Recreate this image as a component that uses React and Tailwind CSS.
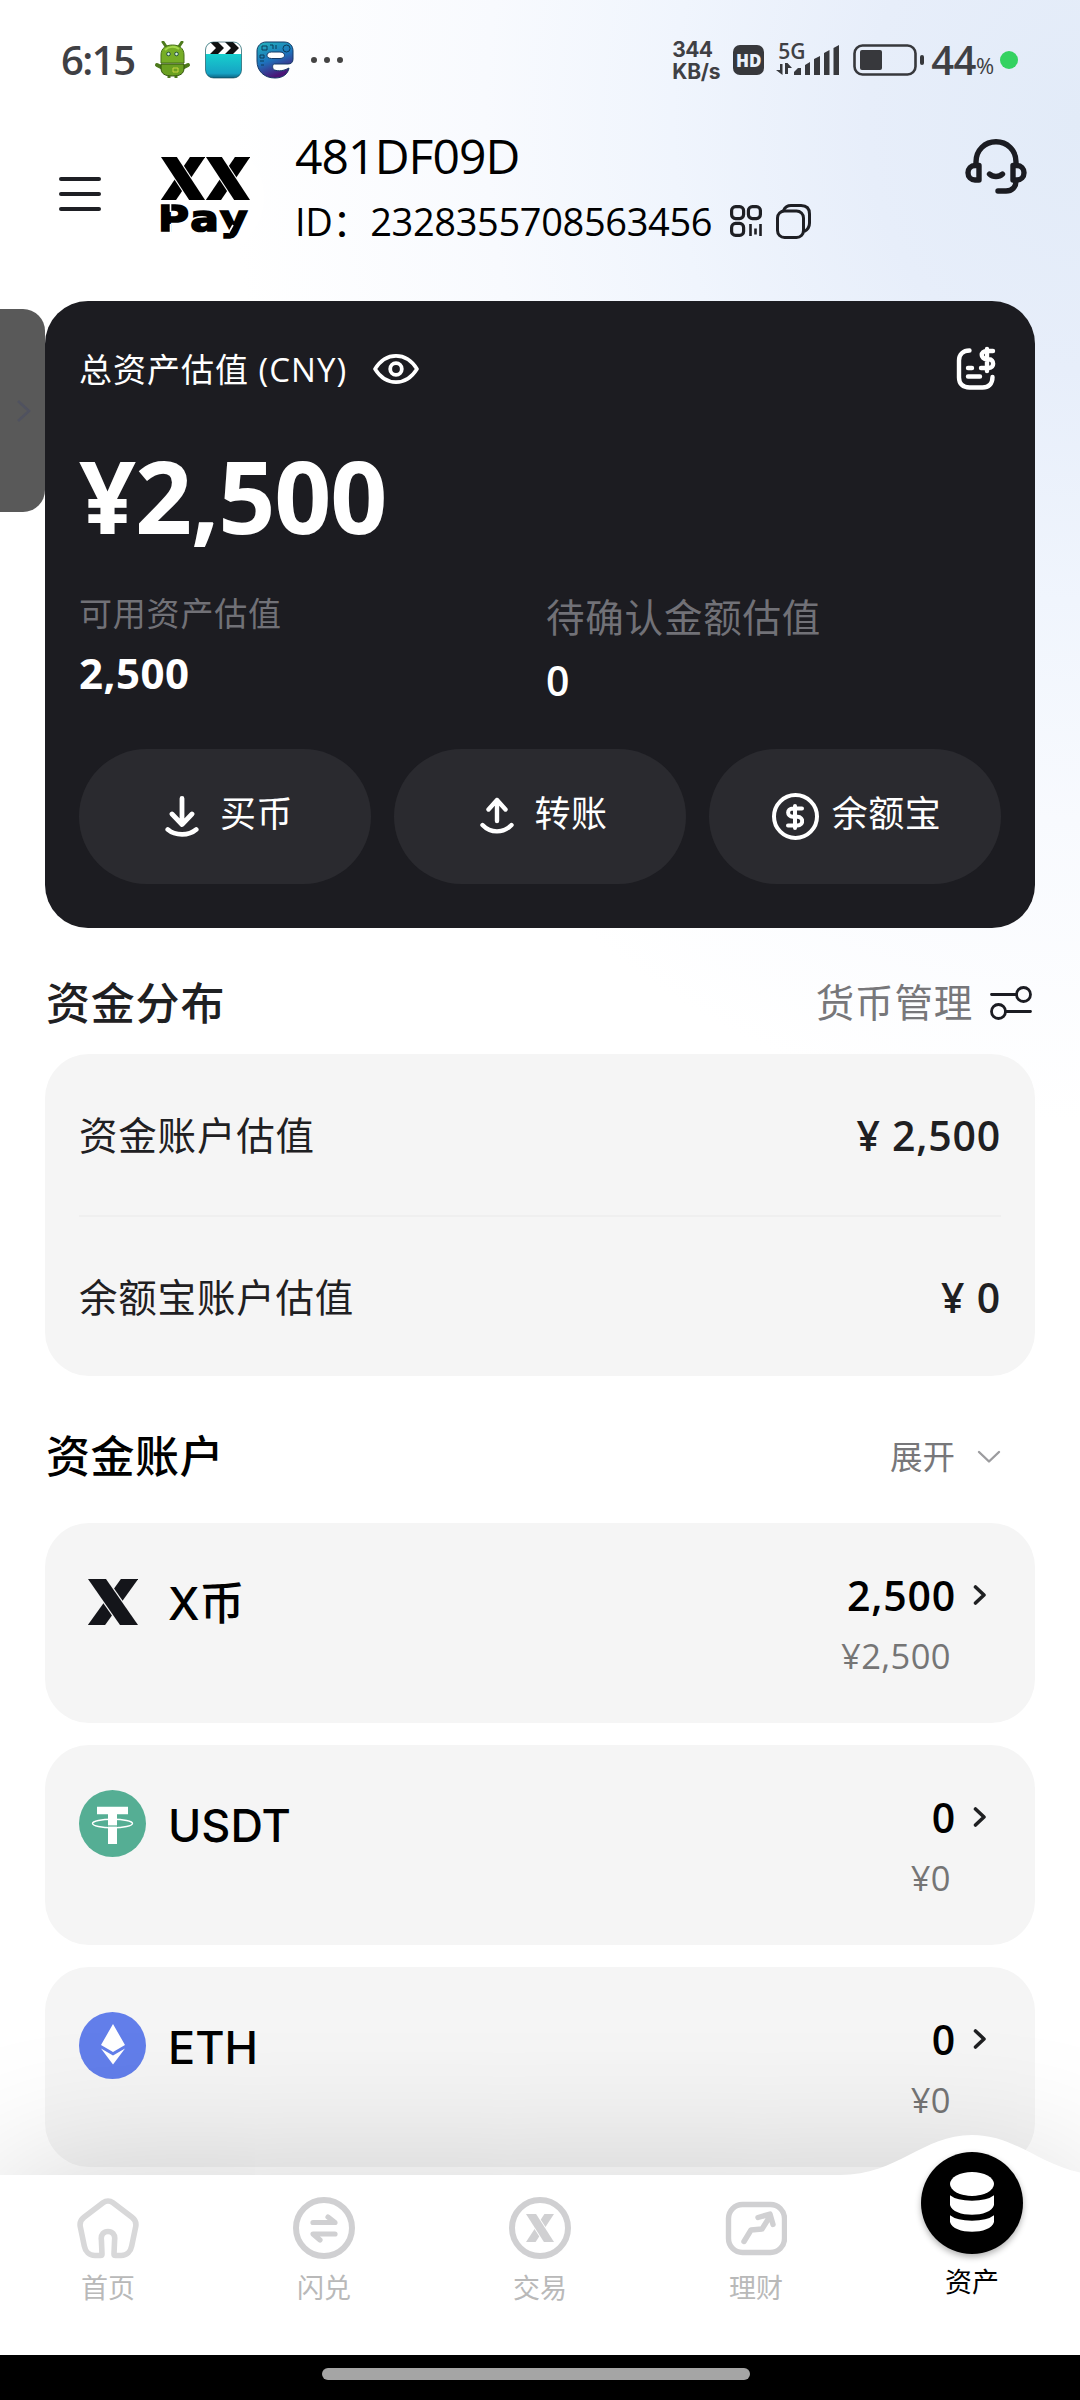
import React from 'react';

const XMark = ({ className, color = '#14151a', gap = '#f5f5f5' }) => (
  <svg viewBox="0 0 50 46" preserveAspectRatio="none" className={className}>
    <line x1="48.7" y1="-10" x2="1.3" y2="56" stroke={color} strokeWidth="14" />
    <line x1="2" y1="-10" x2="48" y2="56" stroke={gap} strokeWidth="17.2" />
    <line x1="2" y1="-10" x2="48" y2="56" stroke={color} strokeWidth="14.8" />
  </svg>
);

const AndroidIcon = () => (
  <svg viewBox="0 0 37 38" className="w-[37px] h-[38px]">
    <path d="M9 1l4 6M28 1l-4 6" stroke="#4d7a1c" strokeWidth="3" strokeLinecap="round" />
    <path d="M3 24l6 3M34 24l-6 3" stroke="#4d7a1c" strokeWidth="4" strokeLinecap="round" />
    <path d="M15 33v4M22 33v4" stroke="#4d7a1c" strokeWidth="3" />
    <path d="M7 14C7 7 12 4 18.500 4S30 7 30 14v8H7z" fill="#76ad26" stroke="#466f18" />
    <path d="M7 23h23v4c0 6-4 8-11.500 8S7 33 7 27z" fill="#6aa021" stroke="#33520f" />
    <path d="M11 9c4-4 10-4 14-1" stroke="#a5d84d" strokeWidth="2" fill="none" />
    <circle cx="14.500" cy="13" r="1.800" fill="#d8f3e4" stroke="#24503c" />
    <circle cx="22.500" cy="13" r="1.800" fill="#d8f3e4" stroke="#24503c" />
    <path d="M19 27h5v4h-5z" fill="none" stroke="#c9d442" />
  </svg>
);

const ClapperIcon = () => (
  <svg viewBox="0 0 37 38" className="w-[37px] h-[38px]">
    <defs>
      <linearGradient id="clap" x1="0" y1="0" x2="0" y2="1">
        <stop offset="0.3" stopColor="#17d3ce" />
        <stop offset="0.85" stopColor="#16a3c4" />
        <stop offset="1" stopColor="#0a5573" />
      </linearGradient>
      <clipPath id="clapBox"><rect x="0.500" y="1" width="36" height="36" rx="8" /></clipPath>
    </defs>
    <g clipPath="url(#clapBox)">
      <rect width="37" height="38" fill="url(#clap)" />
      <rect width="37" height="13" fill="#fff" />
      <path d="M5 1h8l6 6-6 6H5l6-6zM20 1h8l6 6-6 6h-8l6-6z" fill="#111" />
    </g>
    <rect x="0.500" y="1" width="36" height="36" rx="8" fill="none" stroke="#0e4450" strokeOpacity="0.6" />
  </svg>
);

const BrowserIcon = () => (
  <svg viewBox="0 0 38 38" className="w-[38px] h-[38px]">
    <defs>
      <linearGradient id="brw" x1="0" y1="0" x2="0.4" y2="1">
        <stop offset="0" stopColor="#23b6bd" />
        <stop offset="0.55" stopColor="#1d74bd" />
        <stop offset="1" stopColor="#4a1476" />
      </linearGradient>
    </defs>
    <path
      d="M10 1h18c6 0 9 4 9 9v8c0 3.500-2 5-5 5H18.500c-2.500 0-2.500 5 0 6 4 1.500 9 1 14.500-2-1 6-6 10-14 10C8 37 1 30 1 20V10c0-5 4-9 9-9zM15.500 11c-6 0-6 6.500 0 6.500h8.500c6 0 6-6.500 0-6.500z"
      fill="url(#brw)" fillRule="evenodd" stroke="#153a66"
    />
    <path d="M6 5h5v4H6zM14 4h3v4M20 4v4M4 14h4v3H4zM4 20h4M5 24h3" stroke="#0c3c5a" fill="none" />
    <circle cx="30.500" cy="7.500" r="3.500" fill="none" stroke="#0c3c5a" />
  </svg>
);

const StatusBar = () => (
  <div className="h-[120px] flex items-center pl-[61px] text-[#3f4044] shrink-0">
    <span className="w-[93px] text-[40px] font-semibold tracking-[-1.5px] leading-none">6:15</span>
    <div className="flex items-center gap-[14px]">
      <AndroidIcon />
      <ClapperIcon />
      <BrowserIcon />
    </div>
    <div className="ml-[17px] flex gap-[7px]">
      <i className="size-[6px] rounded-full bg-[#444]" />
      <i className="size-[6px] rounded-full bg-[#444]" />
      <i className="size-[6px] rounded-full bg-[#444]" />
    </div>
    <div className="ml-auto mr-[62px] flex items-center">
      <div className="w-[61px] h-[44px] pt-[1px] flex flex-col justify-between font-['Inter'] font-bold whitespace-nowrap">
        <span className="text-[21px] leading-[22px] tracking-[-0.6px]">344</span>
        <span className="text-[21px] leading-[22px] tracking-[-0.2px]">KB/s</span>
      </div>
      <div className="w-[31px] h-[30px] rounded-[7px] bg-[#37383c] text-[#eaf1fb] text-[17px] font-extrabold leading-none flex items-center justify-center">HD</div>
      <div className="ml-[12px] w-[64px] h-[34px] relative">
        <span className="block text-[21px] leading-[16px] font-semibold pl-[2px]">5G</span>
        <svg viewBox="0 0 64 30" className="absolute left-0 bottom-[2px] w-[64px] h-[30px]" fill="#37383c">
          <path d="M4 19h2.500v11L0 25h4zM9 29V18h2.500l4.500 5h-4v6z" />
          <path d="M18 30v-3l4-4h3v7zM29 30V20l5-3v13zM38 30V14l6-3v19zM48 30V8l5.500-3v25zM57.500 30V3L63 0v30z" />
        </svg>
      </div>
      <svg viewBox="0 0 72 32" className="ml-[13px] w-[72px] h-[32px]" fill="none">
        <rect x="1.500" y="1.500" width="61" height="29" rx="8" stroke="#37383c" strokeWidth="2.600" />
        <rect x="7" y="6" width="22" height="20" rx="2" fill="#37383c" />
        <rect x="67" y="11" width="4" height="10" rx="2" fill="#37383c" />
      </svg>
      <span className="ml-[6px] text-[40px] leading-none font-semibold tracking-[-0.5px]">44</span>
      <span className="text-[22px] leading-none pt-[10px] w-[18px]">%</span>
      <i className="ml-[6px] size-[18px] rounded-full bg-[#34d261]" />
    </div>
  </div>
);

const Header = () => (
  <div className="h-[181px] flex items-start pl-[59px] pr-[53px] shrink-0">
    <div className="mt-[57px] w-[42px] h-[34px] flex flex-col justify-between">
      <i className="h-[4px] rounded-full bg-[#1e1f24]" />
      <i className="h-[4px] rounded-full bg-[#1e1f24]" />
      <i className="h-[4px] rounded-full bg-[#1e1f24]" />
    </div>

    <div className="ml-[45px] mt-[18px] size-[118px] rounded-full bg-white flex flex-col items-center pt-[19px]">
      <div className="flex gap-[1px]">
        <XMark className="w-[44px] h-[43px]" color="#000" gap="#fff" />
        <XMark className="w-[44px] h-[43px]" color="#000" gap="#fff" />
      </div>
      <svg viewBox="0 0 90 42" className="mt-[1px] w-[90px] h-[42px] overflow-visible">
        <g fontSize="35" fontWeight="700" stroke="#000" strokeWidth="1.600" className="font-['DejaVu_Sans']">
          <text x="-2" y="30" textLength="92" lengthAdjust="spacingAndGlyphs" letterSpacing="2">Pay</text>
        </g>
        <path d="M10.500 3v8M10.500 23v9M73 24l-4.500 8" stroke="#fff" strokeWidth="1.600" />
      </svg>
    </div>

    <div className="ml-[31px] mt-[8px] text-black">
      <p className="text-[48px] leading-[56px] tracking-[-0.9px]">481DF09D</p>
      <div className="mt-[13px] h-[48px] flex items-center text-[38px] leading-[48px]">
        <span className="tracking-[-0.35px]">ID：2328355708563456</span>
        <svg viewBox="0 0 32 32" className="ml-[18px] w-[32px] h-[32px]" fill="none" stroke="#1e1f24" strokeWidth="3.200">
          <rect x="1.600" y="1.600" width="12" height="12" rx="4" />
          <rect x="18.400" y="1.600" width="12" height="12" rx="4" />
          <rect x="1.600" y="18.400" width="12" height="12" rx="4" />
          <path d="M20.500 19v12M25.500 23.500v6M30.500 19v12" strokeWidth="2.600" />
        </svg>
        <svg viewBox="0 0 35 35" className="ml-[14px] w-[35px] h-[35px]" fill="none" stroke="#1e1f24" strokeWidth="3">
          <rect x="1.500" y="7" width="26" height="26.500" rx="7" />
          <path d="M7.500 6.500C9 3 11 1.500 15 1.500h10c5.500 0 8.500 3 8.500 8.500v9c0 4-2 7-5.500 8.500" />
        </svg>
      </div>
    </div>

    <svg viewBox="0 0 62 55" className="ml-auto mt-[19px] w-[62px] h-[55px]" fill="none" stroke="#1b1c22" strokeWidth="5.400" strokeLinecap="round" strokeLinejoin="round">
      <path d="M11 25v-2C11 11 20 2.800 31 2.800S51 11 51 23v2" />
      <path d="M14 26.500v14.500H10c-4 0-7-3-7-7.200s3-7.300 7-7.300zM48 26.500v14.500h4c4 0 7-3 7-7.200s-3-7.300-7-7.300z" />
      <path d="M24.500 35c3.500 3.300 9.500 3.300 13 0M51 42c0 6-4 10-10 10h-8" />
    </svg>
  </div>
);

const ActionButton = ({ icon, label, gap }) => (
  <button className={`h-[135px] rounded-full bg-[#2a2a2f] flex items-center justify-center ${gap}`}>
    {icon}
    <span className="text-[36px] leading-none tracking-[0.5px] -mt-[5px]">{label}</span>
  </button>
);

const AssetCard = () => (
  <div className="mx-[45px] h-[627px] rounded-[43px] bg-[#1c1c21] text-white px-[34px] shrink-0">
    <div className="h-[136px] flex items-center">
      <span className="text-[33px] leading-none tracking-[1px]">总资产估值 (CNY)</span>
      <svg viewBox="0 0 46 30" className="ml-[26px] w-[46px] h-[30px]" fill="none" stroke="#fff" strokeWidth="3.600">
        <path d="M2 15C13-2.500 33-2.500 44 15 33 32.500 13 32.500 2 15z" strokeLinejoin="round" />
        <circle cx="23" cy="15" r="5.800" strokeWidth="3.800" />
      </svg>
      <svg viewBox="0 0 40 44" className="ml-auto mr-[5px] -mt-[3px] w-[40px] h-[44px]" fill="none" stroke="#fff" strokeWidth="4.400" strokeLinecap="round" strokeLinejoin="round">
        <path d="M13.500 4.500C7 4.500 3 8.500 3 14.500v17c0 6.500 4 10 10.500 10h13c6 0 10-3.500 10-10.500" />
        <path d="M12 22h4M12 30.500h12M37 5h-6c-7 0-7 8 0 8.300h2c5.500.2 5.500 8.700 0 8.700h-8M31 3v22" />
      </svg>
    </div>
    <p className="h-[122px] text-[100px] leading-[116px] font-bold tracking-[-1.2px]">¥2,500</p>
    <div className="grid grid-cols-2 mt-[28px] h-[162px]">
      <div>
        <p className="text-[33px] leading-[50px] tracking-[0.8px] text-[#717177] mt-[2px]">可用资产估值</p>
        <p className="text-[42px] leading-[60px] font-bold tracking-[0.5px] mt-[4px]">2,500</p>
      </div>
      <div className="pl-[6px]">
        <p className="text-[38.500px] leading-[56px] tracking-[0.8px] text-[#717177] mt-[2px]">待确认金额估值</p>
        <p className="text-[41px] leading-[60px] font-semibold mt-[5px]">0</p>
      </div>
    </div>
    <div className="grid grid-cols-3 gap-[23px]">
      <ActionButton
        label="买币"
        gap="gap-[21px] pl-[8px]"
        icon={
          <svg viewBox="0 0 34 41" className="w-[34px] h-[41px]" fill="none" stroke="#fff" strokeWidth="4.800" strokeLinecap="round" strokeLinejoin="round">
            <path d="M17 2.500V28M7 18l10 10.500L27 18M2.800 33.500c7.500 6.500 21 6.500 28.400 0" />
          </svg>
        }
      />
      <ActionButton
        label="转账"
        gap="gap-[20px] pl-[8px]"
        icon={
          <svg viewBox="0 0 34 37" className="-mt-[2px] w-[34px] h-[37px]" fill="none" stroke="#fff" strokeWidth="4.400" strokeLinecap="round" strokeLinejoin="round">
            <path d="M17 24V3M8.500 12.500L17 3l8.500 9.500M2.500 28c8 8.500 21 8.500 29 0" />
          </svg>
        }
      />
      <ActionButton
        label="余额宝"
        gap="gap-[13px] pl-[3px]"
        icon={
          <span className="size-[47px] rounded-full border-4 border-white flex items-center justify-center">
            <svg viewBox="0 0 18 26" className="w-[18px] h-[26px]" fill="none" stroke="#fff" strokeWidth="4" strokeLinecap="round" strokeLinejoin="round">
              <path d="M16 4.500H7c-6.500 0-6.500 8 0 8.300h4.500c6.500.3 6 8.700 0 8.700H2M9 2v22" />
            </svg>
          </span>
        }
      />
    </div>
  </div>
);

const DistributionRow = ({ label, value }) => (
  <div className="h-[160px] flex items-center justify-between text-[#1f2022]">
    <span className="text-[38.500px] tracking-[0.8px] leading-none">{label}</span>
    <span className="text-[41px] font-semibold tracking-[0.8px] leading-none">{value}</span>
  </div>
);

const Distribution = () => (
  <>
    <div className="h-[126px] pt-[24px] pl-[46px] pr-[48px] flex items-start justify-between shrink-0">
      <h2 className="text-[44px] leading-[102px] h-[102px] font-medium tracking-[0.8px] text-[#1f2022]">资金分布</h2>
      <div className="flex items-center h-[102px]">
        <span className="text-[38.500px] tracking-[0.8px] text-[#77777a]">货币管理</span>
        <svg viewBox="0 0 42 34" className="ml-[17px] w-[42px] h-[34px]" fill="none" stroke="#1b1c22" strokeWidth="2.800" strokeLinecap="round">
          <circle cx="33.500" cy="8.500" r="7" />
          <circle cx="8.500" cy="25.500" r="7" />
          <path d="M1.500 8.500h25M15.500 25.500h25" />
        </svg>
      </div>
    </div>
    <div className="mx-[45px] h-[322px] rounded-[44px] bg-[#f5f5f5] px-[34px] pt-[1px] shrink-0">
      <DistributionRow label="资金账户估值" value="¥ 2,500" />
      <div className="h-[2px] bg-[#efefef]" />
      <DistributionRow label="余额宝账户估值" value="¥ 0" />
    </div>
  </>
);

const UsdtIcon = () => (
  <svg viewBox="0 0 67 67" className="size-[67px]">
    <circle cx="33.500" cy="33.500" r="33.500" fill="#55ae94" />
    <ellipse cx="33.500" cy="33.500" rx="20" ry="4.200" fill="none" stroke="#fff" strokeWidth="1.400" />
    <path d="M18 20.500h31M33.500 19v35" stroke="#fff" strokeWidth="7.500" />
    <path d="M33.500 20v34" stroke="#fff" strokeWidth="9" />
    <path d="M28 36h11" stroke="#55ae94" strokeWidth="1.200" />
  </svg>
);

const EthIcon = () => (
  <svg viewBox="0 0 67 67" className="size-[67px]">
    <circle cx="33.500" cy="33.500" r="33.500" fill="#627eea" />
    <path d="M34 12l12 21-12 7-12-7zM34 52.500L22 36.500l12 7 12-7z" fill="#fff" />
  </svg>
);

const COINS = [
  { name: 'X币', amount: '2,500', fiat: '¥2,500', icon: <XMark className="ml-[9px] mt-[1px] w-[50px] h-[46px]" /> },
  { name: 'USDT', amount: '0', fiat: '¥0', icon: <UsdtIcon /> },
  { name: 'ETH', amount: '0', fiat: '¥0', icon: <EthIcon /> },
];

const CoinCard = ({ coin }) => (
  <div className="h-[200px] rounded-[44px] bg-[#f5f5f5] pl-[34px] pr-[48px] pt-[45px] flex justify-between shrink-0">
    <div className="h-[67px] flex items-center">
      <div className="w-[89px]">{coin.icon}</div>
      <span className="text-[45px] font-medium leading-none text-black pt-[3px] font-['Inter','Noto_Sans_CJK_SC',sans-serif]">{coin.name}</span>
    </div>
    <div>
      <div className="h-[54px] flex items-center justify-end">
        <span className="text-[41px] font-semibold tracking-[0.8px] leading-none text-black">{coin.amount}</span>
        <svg viewBox="0 0 14 22" className="ml-[17px] w-[14px] h-[22px]" fill="none" stroke="#1f2022" strokeWidth="3.600" strokeLinecap="round" strokeLinejoin="round">
          <path d="M2.500 3l8.500 8-8.500 8" />
        </svg>
      </div>
      <p className="text-right pr-[36px] mt-[10px] text-[34.500px] leading-[48px] tracking-[0.4px] text-[#757575]">{coin.fiat}</p>
    </div>
  </div>
);

const Accounts = () => (
  <>
    <div className="h-[147px] pl-[46px] pr-[79px] pb-[5px] pt-[18px] flex items-center justify-between shrink-0">
      <h2 className="text-[44px] leading-none font-medium tracking-[0.5px] text-black">资金账户</h2>
      <div className="flex items-center pt-[2px]">
        <span className="text-[32.500px] leading-none text-[#77777a]">展开</span>
        <svg viewBox="0 0 24 14" className="ml-[22px] w-[24px] h-[14px]" fill="none" stroke="#9c9c9f" strokeWidth="2.400" strokeLinecap="round" strokeLinejoin="round">
          <path d="M2 2l10 9.500L22 2" />
        </svg>
      </div>
    </div>
    <div className="mx-[45px] flex flex-col gap-[22px]">
      {COINS.map((coin) => (
        <CoinCard key={coin.name} coin={coin} />
      ))}
    </div>
  </>
);

const TABS = [
  {
    label: '首页',
    icon: (
      <path d="M31 4c2 0 3.500.7 5 1.800l19 14.400c3.300 2.500 4.500 5.500 3.700 9.500l-4 19.300c-1 5.500-5 9.500-10.500 9.500h-5.700c-1 0-1.500-.5-1.500-1.500L37.600 43c.9-5.500-2.600-8.500-6.600-8.500s-7.500 3-6.600 8.500L25 57c0 1-.5 1.500-1.500 1.500h-5.700c-5.500 0-9.500-4-10.500-9.500l-4-19.300c-.8-4 .4-7 3.700-9.500L26 5.800C27.500 4.700 29 4 31 4z" stroke="#d8d8d9" strokeWidth="5.600" strokeLinejoin="round" />
    ),
  },
  {
    label: '闪兑',
    icon: (
      <>
        <circle cx="31" cy="31" r="28" stroke="#d0d0d2" strokeWidth="6" />
        <path d="M20 25.500h22L35 20M42 37H20l7 6" stroke="#d0d0d2" strokeWidth="5.200" strokeLinecap="round" strokeLinejoin="round" />
      </>
    ),
  },
  {
    label: '交易',
    icon: (
      <>
        <circle cx="31" cy="31" r="28" stroke="#d0d0d2" strokeWidth="6" />
        <svg x="17" y="17" width="28" height="28" viewBox="0 0 50 46" preserveAspectRatio="none">
          <path d="M48.700-10L1.300 56" stroke="#d0d0d2" strokeWidth="14" />
          <path d="M2-10l46 66" stroke="#fff" strokeWidth="18" />
          <path d="M2-10l46 66" stroke="#d0d0d2" strokeWidth="14.800" />
        </svg>
      </>
    ),
  },
  {
    label: '理财',
    icon: (
      <>
        <rect x="3.500" y="7.500" width="56" height="48" rx="14" stroke="#d0d0d2" strokeWidth="5.400" />
        <path d="M19 44.500l7-11.500 11-1 7.500-12M33 20.500l12-3.500 3 10.500" stroke="#d0d0d2" strokeWidth="5.400" strokeLinecap="round" strokeLinejoin="round" />
      </>
    ),
  },
];

const BottomNav = () => (
  <div className="absolute inset-x-0 bottom-0">
    <div className="relative h-[180px] bg-white shadow-[0_0_150px_rgba(0,0,0,0.18)] grid grid-cols-5">
      <svg viewBox="0 0 240 41" className="absolute right-0 -top-[40px] w-[240px] h-[41px]" fill="#fff">
        <path d="M0 40C58 40 82 0 132 0s74 40 132 40v1H0z" />
      </svg>
      {TABS.map((tab) => (
        <div key={tab.label} className="flex flex-col items-center pt-[22px]">
          <svg viewBox="0 0 62 62" className="size-[62px]" fill="none">{tab.icon}</svg>
          <span className="mt-[9px] text-[27px] leading-[40px] text-[#b9b9b9]">{tab.label}</span>
        </div>
      ))}
      <div className="relative flex flex-col items-center -mt-[23px]">
        <div className="size-[102px] rounded-full bg-black shadow-[0_3px_6px_rgba(0,0,0,0.3)] flex items-center justify-center">
          <svg viewBox="0 0 44 60" className="w-[44px] h-[60px] -mt-[2px]">
            <path d="M0 40c5 8 39 8 44 0v10c-3 13-41 13-44 0z" fill="#fff" />
            <path d="M0 20c5 8 39 8 44 0v13c-3 13-41 13-44 0z" fill="#fff" />
            <ellipse cx="22" cy="12" rx="22" ry="12" fill="#fff" />
            <path d="M-1 19c7 10 39 10 46 0M-1 39c7 10 39 10 46 0" fill="none" stroke="#000" strokeWidth="4.600" />
          </svg>
        </div>
        <span className="mt-[8px] text-[27px] leading-[40px] text-black">资产</span>
      </div>
    </div>
    <div className="relative h-[45px] bg-black flex justify-center pt-[13px]">
      <div className="-ml-[8px] w-[428px] h-[12px] rounded-full bg-[#a5a5a5]" />
    </div>
  </div>
);

export default function App() {
  return (
    <div className="relative w-[1080px] h-[2400px] overflow-hidden flex flex-col bg-white bg-[radial-gradient(850px_1000px_at_1080px_120px,#e2ebf8_0%,#e7eefa_25%,#f0f5fd_48%,#f8fafe_70%,#ffffff_100%)] font-['Open_Sans','Noto_Sans_CJK_SC',sans-serif]">
      <StatusBar />
      <Header />
      <AssetCard />
      <Distribution />
      <Accounts />
      <BottomNav />

      {/* Drawer handle */}
      <div className="absolute left-0 top-[309px] w-[45px] h-[203px] rounded-r-[22px] bg-[#595959]">
        <svg viewBox="0 0 16 22" className="absolute left-[16px] top-[91px] w-[16px] h-[22px]" fill="none" stroke="#50525f" strokeWidth="2.600">
          <path d="M2 1l11 10L2 21" />
        </svg>
      </div>
    </div>
  );
}
